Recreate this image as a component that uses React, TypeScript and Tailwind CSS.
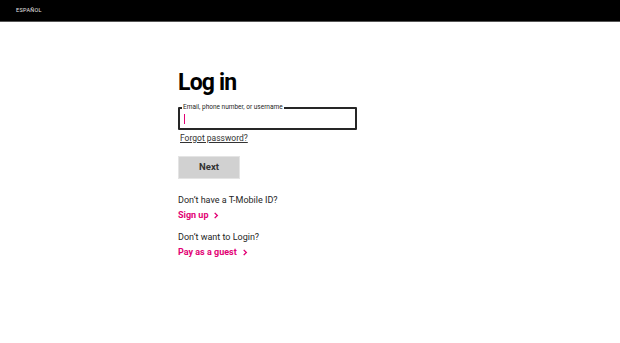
import React from 'react';

const Chevron: React.FC = () => (
  <svg width="6" height="7" viewBox="0 0 6 8" className="ml-[5px]" fill="none">
    <path d="M1.5 1l3 3-3 3" stroke="#e20074" strokeWidth="1.6" />
  </svg>
);

const App: React.FC = () => {
  return (
    <div className="min-h-[343px] w-full bg-white font-['Roboto',sans-serif] text-[#262626]">
      <header className="h-[22px] w-full bg-black border-b border-[#555] flex items-center pl-4">
        <span className="text-[5.5px] tracking-[0.3px] text-[#e6e6e6]">ESPAÑOL</span>
      </header>
      <main className="pl-[178px] pt-[48px] flex flex-col">
        <h1 className="text-[23px] leading-[25px] font-bold tracking-[-0.8px] text-black">Log in</h1>
        <div className="relative mt-[12px] w-[179px] h-[23px] border-2 border-[#262626] rounded-[1px]">
          <span className="absolute -top-[6px] left-[2px] bg-white px-[1px] text-[6.5px] leading-[8px] text-[#262626]">
            Email, phone number, or username
          </span>
          <div className="absolute left-[4px] top-[5px] w-[1px] h-[10px] bg-[#e20074]" />
        </div>
        <a className="mt-[2px] ml-[2px] text-[8.5px] leading-[12px] underline text-[#333]">Forgot password?</a>
        <button className="mt-[12px] w-[62px] h-[23px] bg-[#d1d1d1] border border-[#e4e4e4] text-[9.5px] font-bold text-[#333]">
          Next
        </button>
        <p className="mt-[15px] text-[9px] leading-[12px] text-[#262626]">Don’t have a T-Mobile ID?</p>
        <a className="mt-[3px] flex items-center text-[9px] leading-[12px] font-bold text-[#e20074]">
          Sign up <Chevron />
        </a>
        <p className="mt-[10px] text-[9px] leading-[12px] text-[#262626]">Don’t want to Login?</p>
        <a className="mt-[3px] flex items-center text-[9px] leading-[12px] font-bold text-[#e20074]">
          Pay as a guest <Chevron />
        </a>
      </main>
    </div>
  );
};

export default App;
